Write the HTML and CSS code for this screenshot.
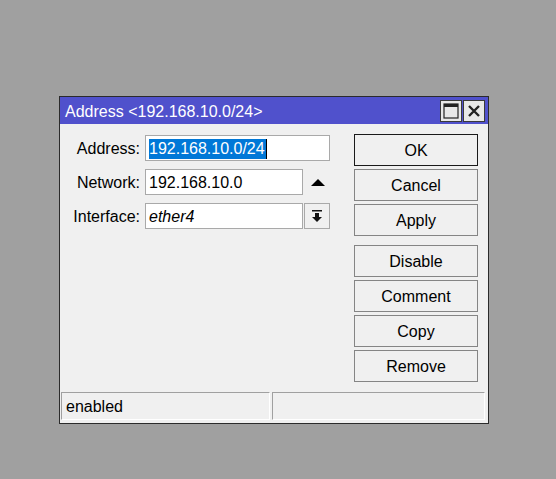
FILE: index.html
```html
<!DOCTYPE html>
<html lang="en">
  <head>
    <meta charset="UTF-8" />
    <title>Address &lt;192.168.10.0/24&gt;</title>
    <link rel="stylesheet" href="styles.css">
  </head>
  <body>
    <!-- Address dialog -->
    <div class="window">
      <div class="titlebar">
        <span class="title">Address &lt;192.168.10.0/24&gt;</span>
        <div class="title-buttons">
          <div class="tbtn">
            <svg width="16" height="16" viewBox="0 0 16 16">
              <rect x="1" y="1" width="14" height="14" fill="none" stroke="#222" stroke-width="1.2" />
              <rect x="1" y="1" width="14" height="3" fill="#222" />
            </svg>
          </div>
          <div class="tbtn">
            <svg width="14" height="14" viewBox="0 0 14 14">
              <path d="M2 2 L12 12 M12 2 L2 12" stroke="#222" stroke-width="2.4" />
            </svg>
          </div>
        </div>
      </div>

      <div class="content">
        <!-- Form fields -->
        <div class="form">
          <div class="row">
            <label class="label">Address:</label>
            <div class="field wide"><span class="selected">192.168.10.0/24</span><span class="caret"></span></div>
          </div>
          <div class="row">
            <label class="label">Network:</label>
            <div class="field">192.168.10.0</div>
            <div class="up-arrow"></div>
          </div>
          <div class="row">
            <label class="label">Interface:</label>
            <div class="field italic">ether4</div>
            <div class="drop-btn">
              <svg width="10" height="12" viewBox="0 0 10 12">
                <rect x="0" y="0" width="10" height="1.5" fill="#111" />
                <rect x="3" y="3" width="4" height="4" fill="#111" />
                <path d="M0 7 L10 7 L5 12 Z" fill="#111" />
              </svg>
            </div>
          </div>
        </div>

        <!-- Action buttons -->
        <div class="actions">
          <button class="btn default">OK</button>
          <button class="btn">Cancel</button>
          <button class="btn">Apply</button>
          <button class="btn spaced">Disable</button>
          <button class="btn">Comment</button>
          <button class="btn">Copy</button>
          <button class="btn">Remove</button>
        </div>
      </div>

      <!-- Status bar -->
      <div class="statusbar">
        <div class="pane first">enabled</div>
        <div class="pane second"></div>
      </div>
    </div>
  </body>
</html>
```

FILE: styles.css
```css
/* Reset & Base */
* {
  box-sizing: border-box;
  margin: 0;
  padding: 0;
}
html,
body {
  min-height: 100%;
  background: #a0a0a0;
  font-family: "Liberation Sans", Arial, sans-serif;
  font-size: 16px;
  color: #000;
}
/* Dialog window */
.window {
  width: 430px;
  height: 328px;
  margin: 96px 0 0 59px;
  border: 1px solid #2b2b2b;
  background: #f0f0f0;
  display: flex;
  flex-direction: column;
}
/* Title bar */
.titlebar {
  height: 27px;
  background: #5051cc;
  color: #fff;
  display: flex;
  align-items: center;
  justify-content: space-between;
  padding: 0 3px 0 5px;
}
.title {
  line-height: 27px;
  padding-top: 2px;
}
.title-buttons {
  display: flex;
  gap: 1px;
}
.tbtn {
  width: 22px;
  height: 22px;
  background: #e8e8e8;
  border: 1px solid #3a3a3a;
  display: flex;
  align-items: center;
  justify-content: center;
}
/* Main area */
.content {
  flex: 1;
  display: flex;
  align-items: flex-start;
}
.form {
  padding-top: 11px;
  display: flex;
  flex-direction: column;
  gap: 8px;
  width: 270px;
  flex-shrink: 0;
}
.row {
  display: flex;
  align-items: center;
  height: 26px;
}
.label {
  width: 80px;
  margin-right: 5px;
  padding-top: 2px;
  text-align: right;
}
.field {
  width: 158px;
  height: 26px;
  background: #fff;
  border: 1px solid #a9a9a9;
  padding: 1px 0 0 3px;
  display: flex;
  align-items: center;
  white-space: nowrap;
}
.field.wide {
  width: 185px;
}
.field.italic {
  font-style: italic;
}
.selected {
  background: #0078d7;
  color: #fff;
  line-height: 20px;
  padding-right: 1px;
}
.caret {
  width: 1px;
  height: 20px;
  background: #000;
}
/* Up triangle beside Network */
.up-arrow {
  margin-left: 8px;
  width: 0;
  height: 0;
  border-left: 7px solid transparent;
  border-right: 7px solid transparent;
  border-bottom: 7px solid #000;
}
.drop-btn {
  margin-left: 1px;
  width: 26px;
  height: 26px;
  border: 1px solid #a9a9a9;
  background: #f0f0f0;
  display: flex;
  align-items: center;
  justify-content: center;
}
/* Buttons column */
.actions {
  padding-top: 10px;
  margin-left: 24px;
  display: flex;
  flex-direction: column;
  gap: 3px;
}
.btn {
  width: 124px;
  height: 32px;
  background: #f0f0f0;
  border: 1px solid #858585;
  padding-top: 2px;
  font-family: inherit;
  font-size: 16px;
  color: #000;
}
.btn.default {
  border-color: #1a1a1a;
}
.btn.spaced {
  margin-top: 6px;
}
/* Status bar */
.statusbar {
  height: 31px;
  display: flex;
  gap: 2px;
  padding: 0 3px 3px 1px;
}
.pane {
  height: 28px;
  border-top: 1px solid #a0a0a0;
  border-left: 1px solid #a0a0a0;
  border-right: 1px solid #fff;
  border-bottom: 1px solid #fff;
  padding: 1px 0 0 4px;
  line-height: 26px;
}
.pane.first {
  width: 209px;
}
.pane.second {
  flex: 1;
}
```
